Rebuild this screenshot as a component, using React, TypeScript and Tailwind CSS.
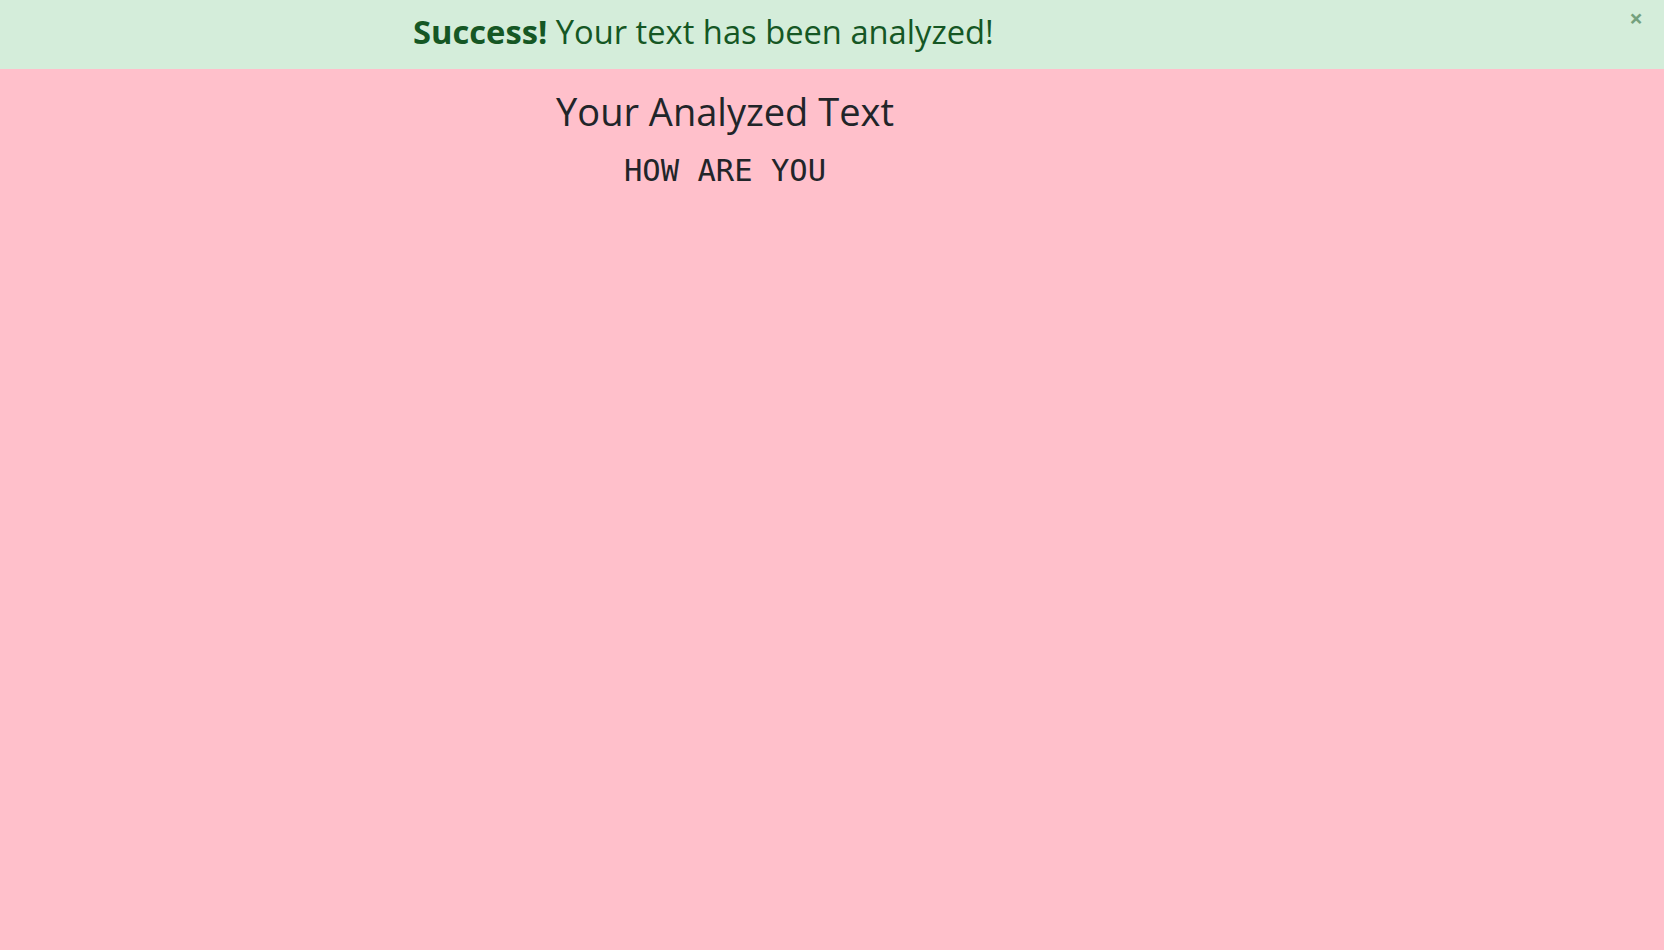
export default function App() {
  return (
    <div className="min-h-[950px] bg-[#ffc0cb]" style={{ fontFamily: "'Open Sans', 'Noto Sans', sans-serif" }}>
      {/* success alert */}
      <div className="relative flex h-[69px] items-center bg-[#d4edda] pb-[5px] pl-[413px] text-[#155724]">
        <p className="text-[32.7px] leading-none">
          <strong className="font-bold">Success!</strong> Your text has been analyzed!
        </p>
        <button className="absolute right-[21px] top-[6px] text-[24px] font-bold leading-none text-[#155724] opacity-50">
          ×
        </button>
      </div>

      <div className="w-[1450px] pt-[16px] text-center text-[#212529]">
        <h1 className="text-[38px] leading-[52px]">Your Analyzed Text</h1>
        <p className="mt-[14px] text-[30.5px] leading-[40px]" style={{ fontFamily: "'DejaVu Sans Mono', monospace" }}>
          HOW ARE YOU
        </p>
      </div>
    </div>
  )
}
